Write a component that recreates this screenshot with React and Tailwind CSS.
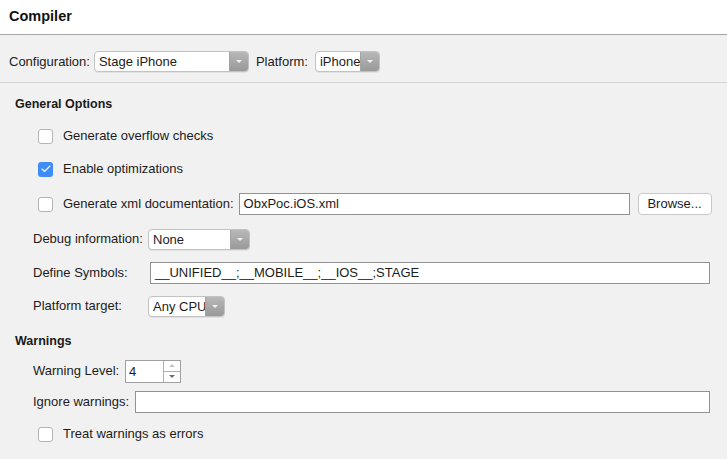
import { Check } from 'lucide-react'

const font = { fontFamily: '"Liberation Sans", Arial, sans-serif' }

function Select({ value, width }) {
  return (
    <div
      className={`flex h-[21px] ${width} items-stretch overflow-hidden rounded-[4px] border border-[#c2c2c2] bg-white shadow-[0_1px_0_rgba(0,0,0,0.06)]`}
    >
      <span className="flex-1 overflow-hidden whitespace-nowrap pl-[4px] text-[13px] leading-[19px] text-[#1c1c1c]">{value}</span>
      <span className="flex w-[19px] shrink-0 items-center justify-center border-l border-[#a4a4a4] bg-gradient-to-b from-[#b8b8b8] to-[#999999]">
        <span className="h-0 w-0 border-x-[3px] border-t-[3px] border-x-transparent border-t-[#f2f2f2]" />
      </span>
    </div>
  )
}

function Checkbox({ checked }) {
  if (checked) {
    return (
      <span className="flex h-[15px] w-[15px] items-center justify-center rounded-[3px] bg-[#3f8cf5]">
        <Check size={12} strokeWidth={2.2} className="text-white" />
      </span>
    )
  }
  return <span className="h-[15px] w-[15px] rounded-[3px] border border-[#b5b5b5] bg-white" />
}

function CheckRow({ checked, label, className, children }) {
  return (
    <div className={`flex h-[22px] items-center pl-[38px] ${className}`}>
      <Checkbox checked={checked} />
      <span className="ml-[10px] text-[13px] text-[#1c1c1c]">{label}</span>
      {children}
    </div>
  )
}

function TextInput({ value, className }) {
  return (
    <div className={`h-[22px] border border-[#929292] bg-white pl-[4px] text-[13px] leading-[20px] text-[#1c1c1c] ${className}`}>
      {value}
    </div>
  )
}

export default function App() {
  return (
    <div style={font} className="h-[459px] w-[727px] overflow-hidden bg-[#f1f1f1] text-[13px] text-[#1c1c1c]">
      <div className="flex h-[35px] items-center border-b border-[#a6a6a6] bg-white pl-[9px]">
        <h1 className="text-[14.5px] font-bold text-[#111]">Compiler</h1>
      </div>

      <div className="flex h-[21px] items-center pl-[9px] mt-[16px]">
        <span>Configuration:</span>
        <div className="ml-[4px]">
          <Select value="Stage iPhone" width="w-[155px]" />
        </div>
        <span className="ml-[7px]">Platform:</span>
        <div className="ml-[7px]">
          <Select value="iPhone" width="w-[65px]" />
        </div>
      </div>

      <div className="mt-[10px] border-t border-[#d2d2d2]" />

      <div className="mt-[10px] flex h-[22px] items-center pl-[15px] text-[12.5px] font-bold text-[#1a1a1a]">
        General Options
      </div>

      <CheckRow label="Generate overflow checks" className="mt-[10px]" />
      <CheckRow checked label="Enable optimizations" className="mt-[11px]" />
      <CheckRow label="Generate xml documentation:" className="mt-[13px]">
        <TextInput value="ObxPoc.iOS.xml" className="ml-[5px] w-[391px]" />
        <button className="ml-[8px] h-[22px] w-[74px] rounded-[4px] border border-[#c9c9c9] bg-white text-[13px] text-[#1c1c1c]">
          Browse...
        </button>
      </CheckRow>

      <div className="mt-[13px] flex h-[22px] items-center pl-[33px]">
        <span className="w-[115px]">Debug information:</span>
        <Select value="None" width="w-[102px]" />
      </div>

      <div className="mt-[12px] flex h-[22px] items-center pl-[33px]">
        <span className="w-[117px]">Define Symbols:</span>
        <TextInput value="__UNIFIED__;__MOBILE__;__IOS__;STAGE" className="w-[560px]" />
      </div>

      <div className="mt-[11px] flex h-[22px] items-center pl-[33px]">
        <span className="w-[115px]">Platform target:</span>
        <Select value="Any CPU" width="w-[77px]" />
      </div>

      <div className="mt-[13px] flex h-[22px] items-center pl-[15px] text-[12.5px] font-bold text-[#1a1a1a]">
        Warnings
      </div>

      <div className="mt-[8px] flex h-[22px] items-center pl-[33px]">
        <span className="w-[92px]">Warning Level:</span>
        <div className="flex h-[23px] w-[56px] border border-[#a0a0a0] bg-white">
          <span className="flex-1 pl-[3px] leading-[21px]">4</span>
          <div className="flex w-[17px] flex-col border-l border-[#b0b0b0]">
            <span className="flex flex-1 items-center justify-center border-b border-[#b0b0b0]">
              <span className="h-0 w-0 border-x-[3px] border-b-[3px] border-x-transparent border-b-[#c4c4c4]" />
            </span>
            <span className="flex flex-1 items-center justify-center">
              <span className="h-0 w-0 border-x-[3px] border-t-[3px] border-x-transparent border-t-[#6e6e6e]" />
            </span>
          </div>
        </div>
      </div>

      <div className="mt-[9px] flex h-[22px] items-center pl-[33px]">
        <span className="w-[102px]">Ignore warnings:</span>
        <TextInput value="" className="w-[575px]" />
      </div>

      <CheckRow label="Treat warnings as errors" className="mt-[10px]" />
    </div>
  )
}
